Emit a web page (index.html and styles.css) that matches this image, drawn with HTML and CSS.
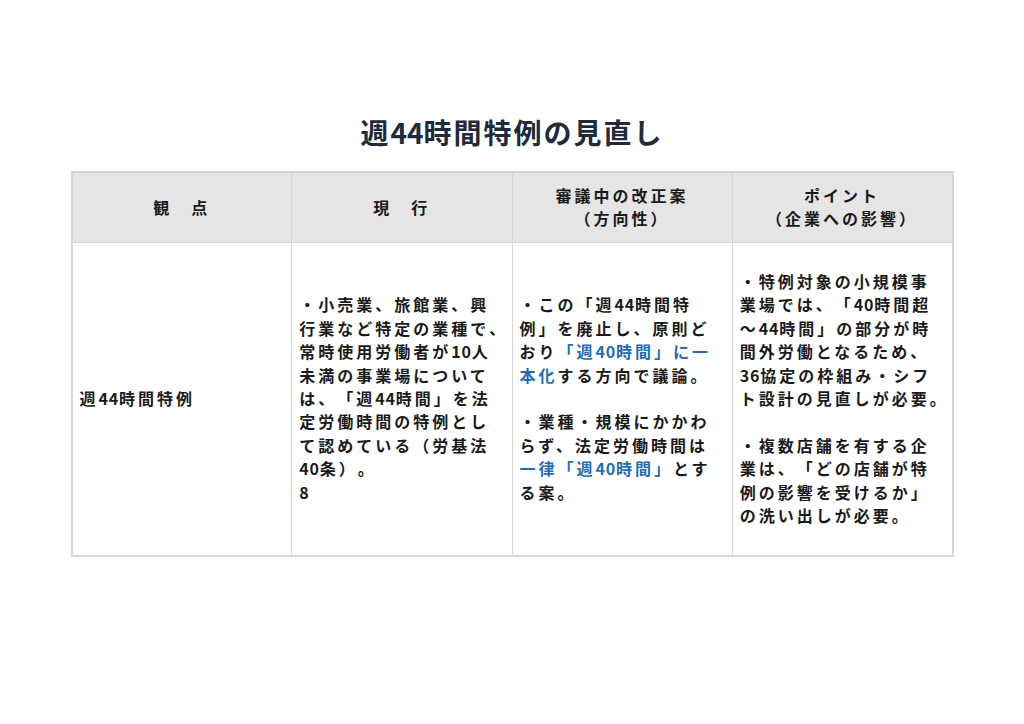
FILE: index.html
```html
<!DOCTYPE html>
<html lang="ja">
<head>
<meta charset="utf-8">
<title>週44時間特例の見直し</title>
<link rel="stylesheet" href="styles.css">
</head>
<body>
<div class="page">
  <h1 class="title">週<span class="num">44</span>時間特例の見直し</h1>
  <table class="grid">
    <colgroup><col><col><col><col></colgroup>
    <thead>
      <tr>
        <th>観　点</th>
        <th>現　行</th>
        <th>審議中の改正案<br>（方向性）</th>
        <th>ポイント<br>（企業への影響）</th>
      </tr>
    </thead>
    <tbody>
      <tr>
        <td>週<span class="num">44</span>時間特例</td>
        <td>・小売業、旅館業、興行業など特定の業種で<span class="hang">、</span>常時使用労働者が<span class="num">10</span>人未満の事業場については、「週<span class="num">44</span>時間」を法定労働時間の特例として認めている（労基法<span class="num">40</span>条）。<br><span class="num">8</span></td>
        <td>・この「週<span class="num">44</span>時間特例」を廃止し、原則どおり<span class="hl">「週<span class="num">40</span>時間」に一本化</span>する方向で議論。<br><br>・業種・規模にかかわらず、法定労働時間は<span class="hl">一律「週<span class="num">40</span>時間」</span>とする案。</td>
        <td>・特例対象の小規模事業場では、「<span class="num">40</span>時間超～<span class="num">44</span>時間」の部分が時間外労働となるため、<span class="num">36</span>協定の枠組み・シフト設計の見直しが必要<span class="hang">。</span><br><br>・複数店舗を有する企業は、「どの店舗が特例の影響を受けるか」の洗い出しが必要。</td>
      </tr>
    </tbody>
  </table>
</div>
</body>
</html>
```

FILE: styles.css
```css
* { box-sizing: border-box; }
html, body { margin: 0; padding: 0; background: #ffffff; }
body {
  font-family: "Noto Sans CJK JP", "Noto Sans", sans-serif;
  color: #1a1a1a;
  text-spacing-trim: space-all;
}
.page {
  width: 1024px;
  padding-top: 112px;
}
.title {
  margin: 0 0 19px;
  text-align: center;
  font-size: 28px;
  line-height: 40px;
  font-weight: 700;
  color: #1f2a3a;
  letter-spacing: 2px;
}
.title .num { letter-spacing: 0; }
.grid {
  width: 883px;
  margin: 0 auto;
  border-collapse: collapse;
  table-layout: fixed;
  border: 2px solid #d6d6d6;
}
.grid th, .grid td {
  border: 1px solid #d6d6d6;
  font-size: 16px;
  line-height: 23.4px;
  letter-spacing: 3px;
  font-weight: 700;
  color: #1a1a1a;
}
.grid th {
  background: #e5e5e5;
  height: 70px;
  text-align: center;
  vertical-align: middle;
  padding: 0 4px;
}
.grid td {
  height: 314px;
  vertical-align: middle;
  padding: 0 13px 0 7px;
  text-align: left;
}
.num { letter-spacing: 0.8px; }
.hang {
  display: inline-block;
  width: 0;
  white-space: nowrap;
}
.hl { color: #1f6db5; }
```
